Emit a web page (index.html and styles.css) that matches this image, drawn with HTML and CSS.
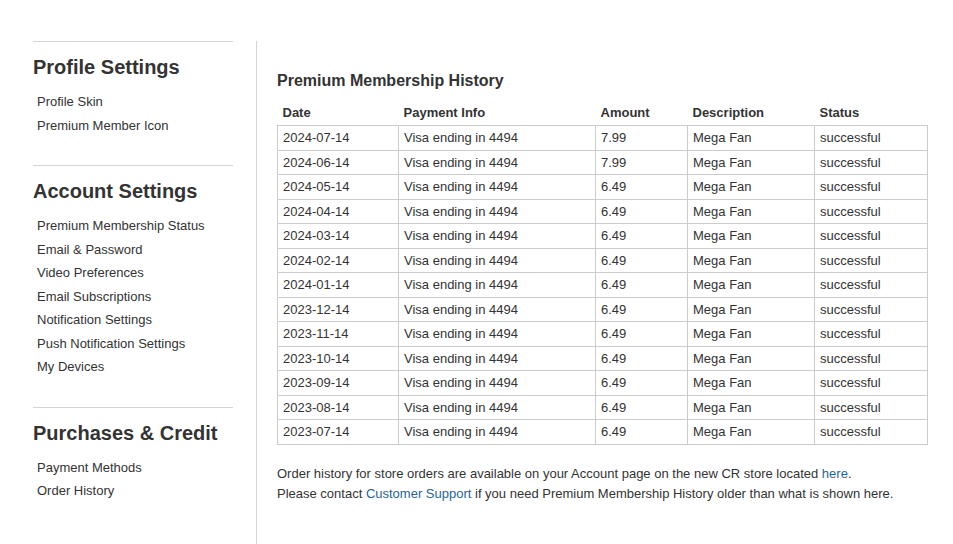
FILE: index.html
```html
<!DOCTYPE html>
<html lang="en">

<head>
  <title>Premium Membership History</title>
  <meta charset="utf-8">
  <meta name="viewport" content="width=device-width, initial-scale=1">
  <link rel="stylesheet" href="styles.css">
</head>

<body>
  <div class="page">
    <nav class="sidebar">
      <div class="side-section">
        <h2>Profile Settings</h2>
        <ul>
          <li><a href="#">Profile Skin</a></li>
          <li><a href="#">Premium Member Icon</a></li>
        </ul>
      </div>
      <div class="side-section">
        <h2>Account Settings</h2>
        <ul>
          <li><a href="#">Premium Membership Status</a></li>
          <li><a href="#">Email &amp; Password</a></li>
          <li><a href="#">Video Preferences</a></li>
          <li><a href="#">Email Subscriptions</a></li>
          <li><a href="#">Notification Settings</a></li>
          <li><a href="#">Push Notification Settings</a></li>
          <li><a href="#">My Devices</a></li>
        </ul>
      </div>
      <div class="side-section">
        <h2>Purchases &amp; Credit</h2>
        <ul>
          <li><a href="#">Payment Methods</a></li>
          <li><a href="#">Order History</a></li>
        </ul>
      </div>
    </nav>

    <main class="content">
      <h3>Premium Membership History</h3>
      <table class="history">
        <colgroup>
          <col style="width: 121px">
          <col style="width: 197px">
          <col style="width: 92px">
          <col style="width: 127px">
          <col style="width: 113px">
        </colgroup>
        <thead>
          <tr>
            <th>Date</th>
            <th>Payment Info</th>
            <th>Amount</th>
            <th>Description</th>
            <th>Status</th>
          </tr>
        </thead>
        <tbody>
          <tr><td>2024-07-14</td><td>Visa ending in 4494</td><td>7.99</td><td>Mega Fan</td><td>successful</td></tr>
          <tr><td>2024-06-14</td><td>Visa ending in 4494</td><td>7.99</td><td>Mega Fan</td><td>successful</td></tr>
          <tr><td>2024-05-14</td><td>Visa ending in 4494</td><td>6.49</td><td>Mega Fan</td><td>successful</td></tr>
          <tr><td>2024-04-14</td><td>Visa ending in 4494</td><td>6.49</td><td>Mega Fan</td><td>successful</td></tr>
          <tr><td>2024-03-14</td><td>Visa ending in 4494</td><td>6.49</td><td>Mega Fan</td><td>successful</td></tr>
          <tr><td>2024-02-14</td><td>Visa ending in 4494</td><td>6.49</td><td>Mega Fan</td><td>successful</td></tr>
          <tr><td>2024-01-14</td><td>Visa ending in 4494</td><td>6.49</td><td>Mega Fan</td><td>successful</td></tr>
          <tr><td>2023-12-14</td><td>Visa ending in 4494</td><td>6.49</td><td>Mega Fan</td><td>successful</td></tr>
          <tr><td>2023-11-14</td><td>Visa ending in 4494</td><td>6.49</td><td>Mega Fan</td><td>successful</td></tr>
          <tr><td>2023-10-14</td><td>Visa ending in 4494</td><td>6.49</td><td>Mega Fan</td><td>successful</td></tr>
          <tr><td>2023-09-14</td><td>Visa ending in 4494</td><td>6.49</td><td>Mega Fan</td><td>successful</td></tr>
          <tr><td>2023-08-14</td><td>Visa ending in 4494</td><td>6.49</td><td>Mega Fan</td><td>successful</td></tr>
          <tr><td>2023-07-14</td><td>Visa ending in 4494</td><td>6.49</td><td>Mega Fan</td><td>successful</td></tr>
        </tbody>
      </table>

      <p class="note">
        Order history for store orders are available on your Account page on the new CR store located <a href="#">here</a>.<br>
        Please contact <a href="#">Customer Support</a> if you need Premium Membership History older than what is shown here.
      </p>
    </main>
  </div>
</body>

</html>
```

FILE: styles.css
```css
body {
  margin: 0;
  background: #fff;
  color: #333;
  font-family: "Liberation Sans", Arial, sans-serif;
  font-size: 13px;
}

a,
a:visited {
  color: #333;
  text-decoration: none;
}

.page {
  display: flex;
  padding-top: 41px;
  min-height: 503px;
}

.sidebar {
  width: 200px;
  margin-left: 33px;
  margin-right: 23px;
}

.side-section {
  border-top: 1px solid #d4d4d4;
  padding-bottom: 28px;
}

.side-section h2 {
  margin: 13px 0 11px;
  font-size: 20px;
  line-height: 24px;
  font-weight: bold;
  color: #333;
}

.side-section ul {
  list-style: none;
  margin: 0;
  padding: 0 0 0 4px;
}

.side-section li {
  line-height: 23.5px;
}

.content {
  flex: 1;
  border-left: 1px solid #d4d4d4;
  padding-left: 20px;
}

.content h3 {
  margin: 30px 0 10px;
  font-size: 16px;
  line-height: 20px;
  font-weight: bold;
  color: #333;
}

.history {
  border-collapse: collapse;
  table-layout: fixed;
  width: 650px;
}

.history th {
  text-align: left;
  font-weight: bold;
  padding: 0 5px;
  height: 24px;
  line-height: 24px;
}

.history td {
  border: 1px solid #ccc;
  padding: 0 5px;
  height: 23.5px;
  line-height: 23px;
  white-space: nowrap;
}

.note {
  margin: 19px 0 0;
  line-height: 20px;
}

.note a,
.note a:visited {
  color: #2a6496;
}
```
